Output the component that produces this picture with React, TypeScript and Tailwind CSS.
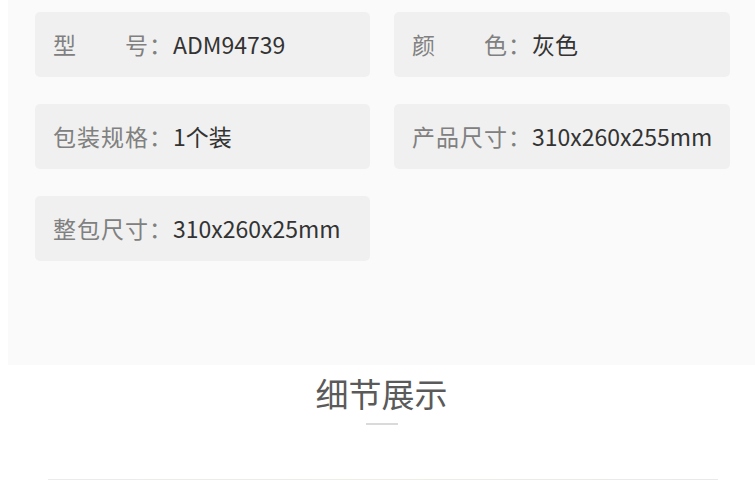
const SPECS = [
  { label: '型　　号', value: 'ADM94739' },
  { label: '颜　　色', value: '灰色' },
  { label: '包装规格', value: '1个装' },
  { label: '产品尺寸', value: '310x260x255mm' },
  { label: '整包尺寸', value: '310x260x25mm' },
];

function SpecCard({ label, value }: { label: string; value: string }) {
  return (
    <div className="h-[65px] bg-[#f0f0f0] rounded-[5px] flex items-center pl-[18px] text-[23px] leading-none whitespace-nowrap">
      <span className="text-[#808080] tracking-[1px]">{label}：</span>
      <span className="text-[#333333]">{value}</span>
    </div>
  );
}

export default function App() {
  return (
    <div
      className="w-[755px] h-[480px] overflow-hidden bg-white"
      style={{ fontFamily: '"Noto Sans CJK SC", "Noto Sans", sans-serif' }}
    >
      {/* spec panel */}
      <div className="ml-2 h-[365px] bg-[#fafafa] pt-3 pl-[27px]">
        <div className="grid grid-cols-[335px_336px] gap-x-6 gap-y-[27px]">
          {SPECS.map((s) => (
            <SpecCard key={s.label} label={s.label} value={s.value} />
          ))}
        </div>
      </div>

      {/* section heading */}
      <div className="ml-2 flex flex-col items-center">
        <h2 className="mt-3 text-[33px] leading-none text-[#5a5a5a] font-normal">细节展示</h2>
        <div className="mt-[13px] w-8 h-[2px] bg-[#dadada]" />
      </div>

      {/* top edge of the detail photo */}
      <div className="mt-[54px] ml-12 w-[670px] h-[2px] bg-gradient-to-r from-[#ebebeb] via-[#efede6] to-[#e9e9e9]" />
    </div>
  );
}
